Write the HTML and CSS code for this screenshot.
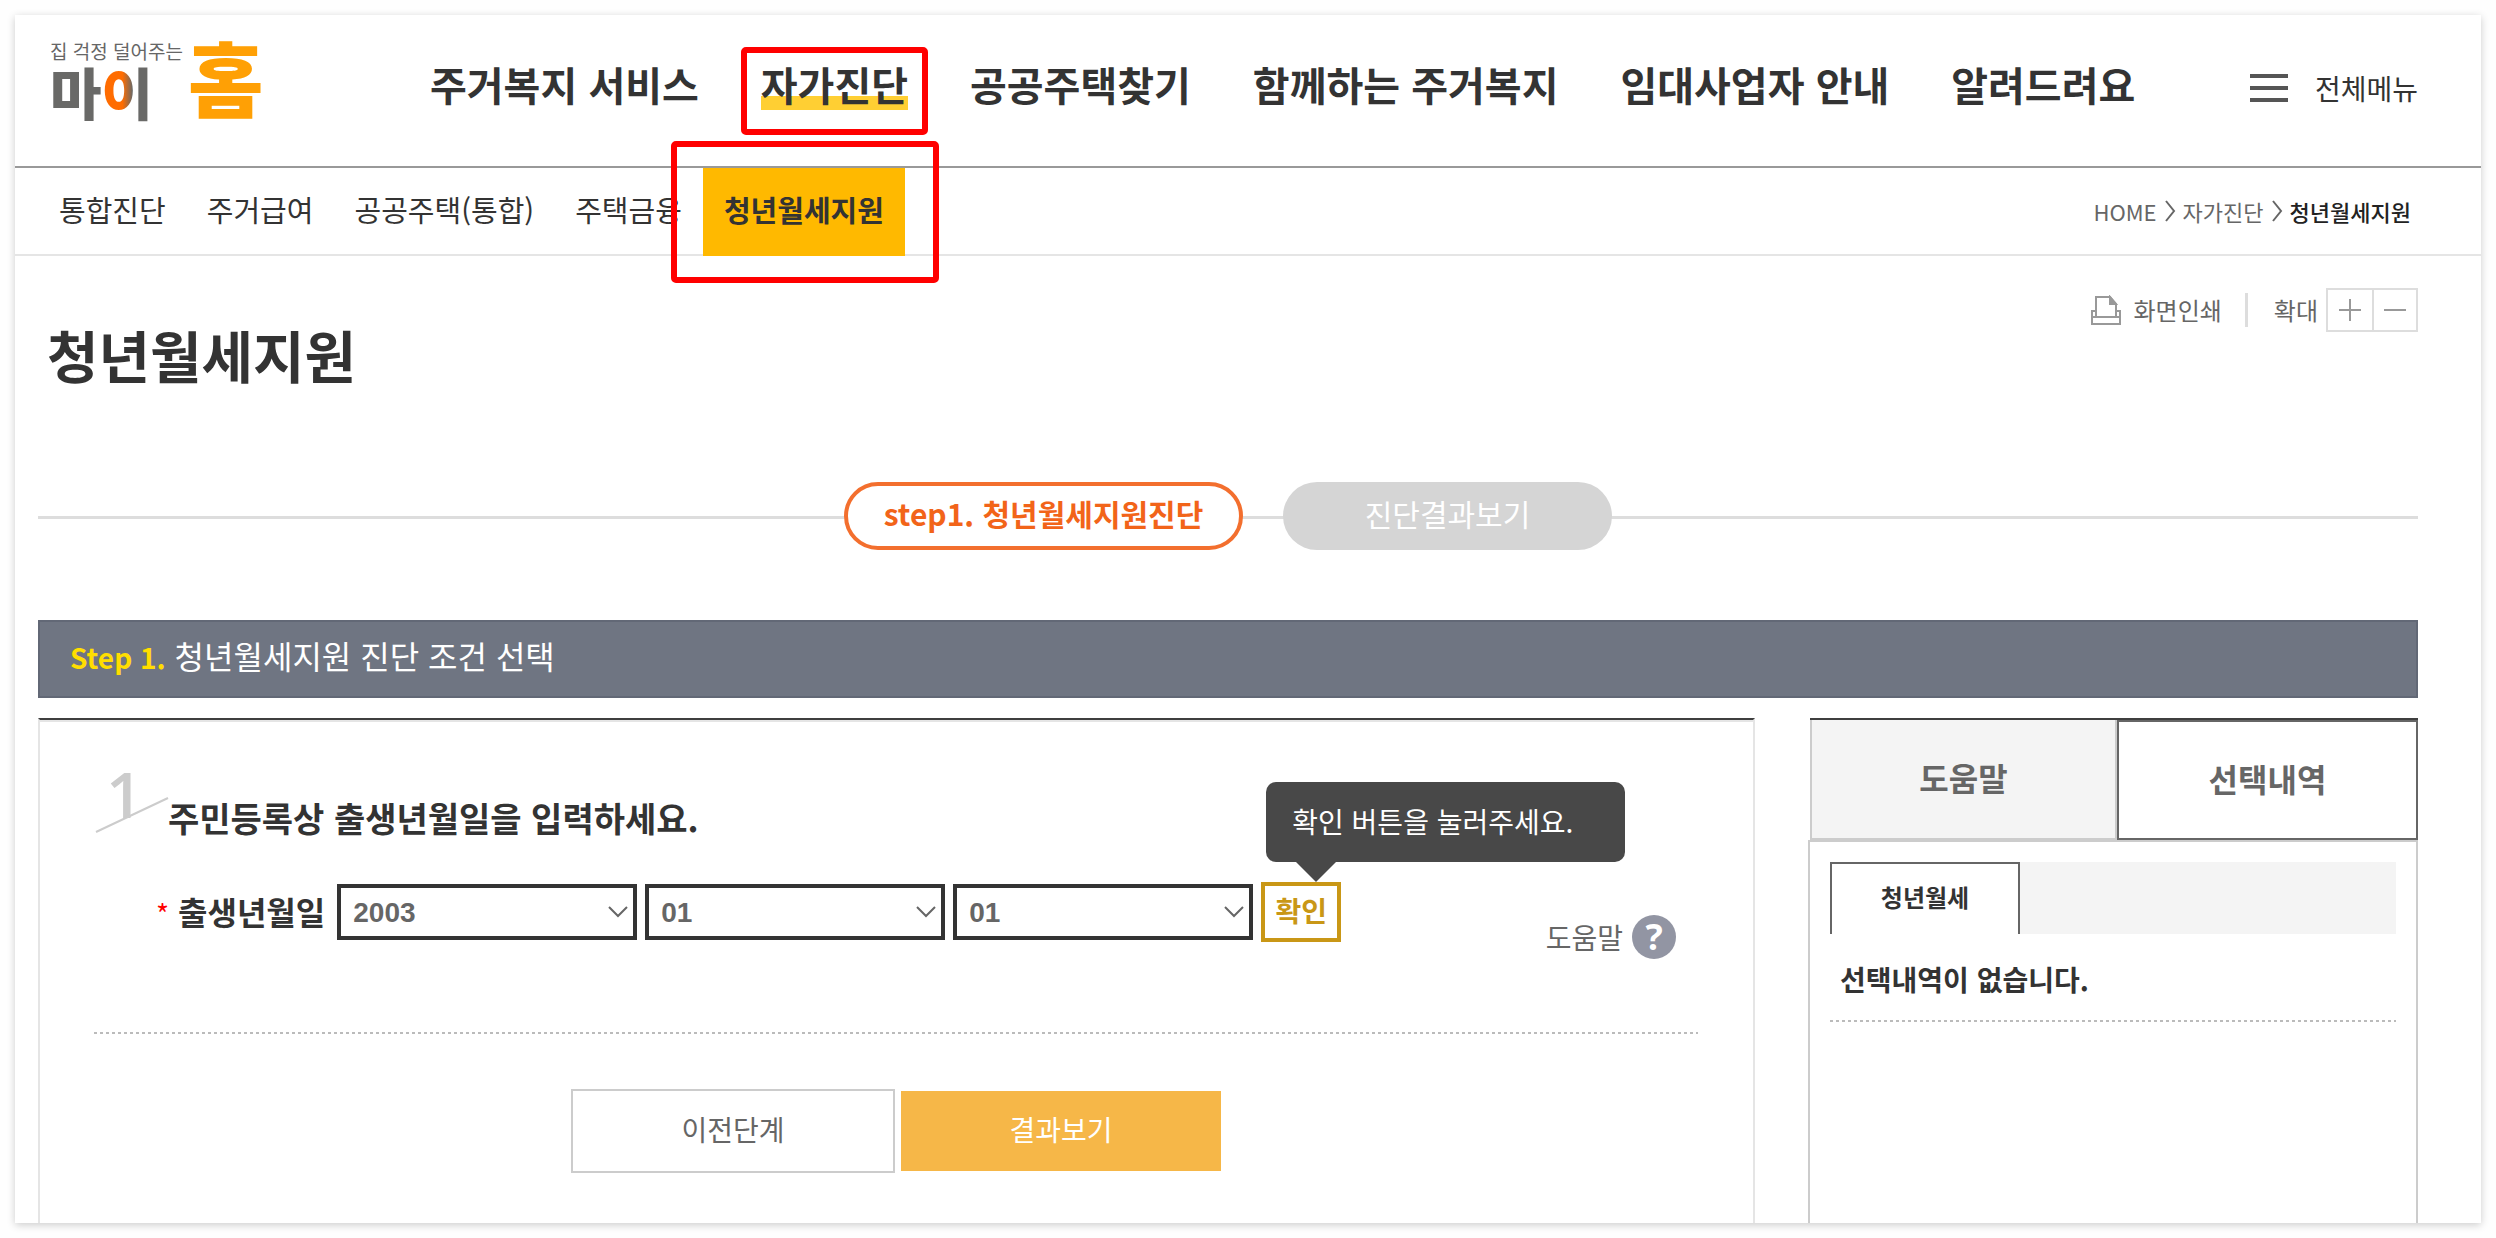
FILE: index.html
```html
<!DOCTYPE html>
<html lang="ko">
  <head>
    <meta charset="UTF-8" />
    <meta name="viewport" content="width=device-width, initial-scale=1.0" />
    <title>청년월세지원 | 마이홈</title>
    <link rel="stylesheet" href="styles.css">
  </head>
  <body>
    <div class="page">
      <header class="header">
        <a href="#" class="logo">
          <span class="logo-left">
            <span class="logo-tagline">집 걱정 덜어주는</span>
            <span class="logo-my">마<span class="logo-ring">이</span></span>
          </span>
          <span class="logo-home">홈</span>
        </a>
        <nav class="gnb">
          <a href="#">주거복지 서비스</a>
          <a href="#" class="active marked">자가진단</a>
          <a href="#">공공주택찾기</a>
          <a href="#">함께하는 주거복지</a>
          <a href="#">임대사업자 안내</a>
          <a href="#">알려드려요</a>
        </nav>
        <button type="button" class="all-menu">
          <svg width="38" height="28" viewBox="0 0 38 28">
            <path d="M0 2h38M0 14h38M0 26h38" stroke="#555" stroke-width="4" />
          </svg>
          전체메뉴
        </button>
      </header>

      <div class="sub-bar">
        <nav class="lnb">
          <a href="#">통합진단</a>
          <a href="#">주거급여</a>
          <a href="#">공공주택(통합)</a>
          <a href="#">주택금융</a>
          <a href="#" class="active marked">청년월세지원</a>
        </nav>
        <div class="breadcrumb">
          <a href="#">HOME</a>
          <svg width="12" height="22" viewBox="0 0 12 22"><path d="M2 1l8 10-8 10" /></svg>
          <a href="#">자가진단</a>
          <svg width="12" height="22" viewBox="0 0 12 22"><path d="M2 1l8 10-8 10" /></svg>
          <strong>청년월세지원</strong>
        </div>
      </div>

      <main class="content">
        <div class="title-row">
          <h1>청년월세지원</h1>
          <div class="tools">
            <button type="button" class="print">
              <svg width="30" height="30" viewBox="0 0 30 30" fill="none" stroke="#999" stroke-width="2">
                <path d="M5 22V2h14l6 7v13" />
                <path d="M19 2v7h6z" fill="#999" />
                <path d="M5 16H1v13h28V16h-4M1 22h28" />
              </svg>
              화면인쇄
            </button>
            <span class="divider"></span>
            <span class="zoom-label">확대</span>
            <div class="zoom-buttons">
              <button type="button" aria-label="확대">
                <svg width="24" height="24" viewBox="0 0 24 24"><path d="M1 12h22M12 1v22" /></svg>
              </button>
              <button type="button" aria-label="축소">
                <svg width="24" height="24" viewBox="0 0 24 24"><path d="M1 12h22" /></svg>
              </button>
            </div>
          </div>
        </div>

        <div class="steps">
          <span class="step on">step1. 청년월세지원진단</span>
          <span class="step">진단결과보기</span>
        </div>

        <h2 class="step-title"><strong>Step 1.</strong> 청년월세지원 진단 조건 선택</h2>

        <div class="columns">
          <form class="question-box">
            <div class="question">
              <svg class="slash" width="74" height="36" viewBox="0 0 74 36"><path d="M1 35L73 1" stroke="#ccc" stroke-width="2" /></svg>
              <span class="number">1</span>
              <h3>주민등록상 출생년월일을 입력하세요.</h3>
            </div>

            <div class="birth-row">
              <label for="year"><span class="required">*</span> 출생년월일</label>
              <span class="select">
                <select id="year" name="year"><option>2003</option></select>
                <svg width="20" height="12" viewBox="0 0 20 12"><path d="M1 1l9 9 9-9" /></svg>
              </span>
              <span class="select">
                <select name="month" aria-label="월"><option>01</option></select>
                <svg width="20" height="12" viewBox="0 0 20 12"><path d="M1 1l9 9 9-9" /></svg>
              </span>
              <span class="select">
                <select name="day" aria-label="일"><option>01</option></select>
                <svg width="20" height="12" viewBox="0 0 20 12"><path d="M1 1l9 9 9-9" /></svg>
              </span>
              <span class="confirm-wrap">
                <button type="button" class="confirm">확인</button>
                <span class="tooltip">확인 버튼을 눌러주세요.</span>
              </span>
              <a href="#" class="help">도움말 <span class="help-icon">?</span></a>
            </div>

            <div class="dots"></div>

            <div class="actions">
              <button type="button" class="prev">이전단계</button>
              <button type="submit" class="result">결과보기</button>
            </div>
          </form>

          <aside class="side">
            <div class="side-tabs">
              <button type="button">도움말</button>
              <button type="button" class="on">선택내역</button>
            </div>
            <div class="side-body">
              <div class="sub-tabs">
                <button type="button">청년월세</button>
              </div>
              <p class="empty">선택내역이 없습니다.</p>
              <div class="dots"></div>
            </div>
          </aside>
        </div>
      </main>
    </div>
  </body>
</html>
```
FILE: styles.css
```css
* {
  box-sizing: border-box;
}

body {
  margin: 0;
  padding: 15px;
  background-color: #fefefe;
  font-family: "Noto Sans CJK KR", "Noto Sans", sans-serif;
  font-size: 28px;
  line-height: 40px;
  color: #333;
}

a {
  color: inherit;
  text-decoration: none;
}

button {
  padding: 0 0 4px;
  border: none;
  background: none;
  font: inherit;
  color: inherit;
  cursor: pointer;
}

h1,
h2,
h3,
p {
  margin: 0;
}

.page {
  display: flex;
  flex-direction: column;
  min-height: calc(100vh - 30px);
  background-color: #fff;
  box-shadow: 0 2px 8px rgba(0, 0, 0, 0.2);
}

/* header */
.header {
  display: flex;
  align-items: center;
  height: 153px;
  padding: 0 63px 0 35px;
  border-bottom: 2px solid #999;
}

.logo {
  display: flex;
  align-items: center;
  width: 380px;
  margin-bottom: 24px;
  font-weight: bold;
}

.logo-left {
  display: flex;
  flex-direction: column;
  width: 138px;
}

.logo-tagline {
  font-size: 19px;
  line-height: 24px;
  color: #666;
  font-weight: normal;
  white-space: nowrap;
}

.logo-my {
  font-size: 56px;
  line-height: 56px;
  font-weight: 900;
  color: #696967;
}

.logo-ring {
  background: linear-gradient(90deg, #ff6c00 40%, #696967 60%);
  background-clip: text;
  -webkit-background-clip: text;
  color: transparent;
}

.logo-home {
  padding-bottom: 6px;
  font-size: 82px;
  line-height: 84px;
  font-weight: 900;
  color: #ffa005;
}

.gnb {
  display: flex;
  flex: 1;
  gap: 62px;
  margin-bottom: 14px;
  font-size: 40px;
  line-height: 56px;
  font-weight: bold;
  white-space: nowrap;
}

.gnb .active {
  background: linear-gradient(#ffcf33, #ffcf33) 0 40px / 100% 14px no-repeat;
}

/* red frames that point out the current menu */
.marked {
  position: relative;
}

.marked::after {
  content: "";
  position: absolute;
  z-index: 1;
  border: 6px solid #f00;
  border-radius: 5px;
}

.gnb .marked::after {
  inset: -9px -20px -23px;
}

.lnb .marked::after {
  inset: -27px -34px -27px -32px;
}

.all-menu {
  display: flex;
  align-items: center;
  gap: 27px;
  padding-bottom: 6px;
}

/* sub menu */
.sub-bar {
  display: flex;
  justify-content: space-between;
  height: 88px;
  padding: 0 70px 0 44px;
  border-bottom: 2px solid #e5e5e5;
}

.lnb {
  display: flex;
  gap: 41px;
  font-size: 29px;
  line-height: 82px;
}

.lnb .active {
  height: 88px;
  margin-left: -20px;
  padding: 0 21px;
  background-color: #ffb900;
  font-weight: bold;
}

.breadcrumb {
  display: flex;
  align-items: center;
  gap: 7px;
  font-size: 22px;
  color: #666;
}

.breadcrumb svg {
  fill: none;
  stroke: #666;
  stroke-width: 2;
}

.breadcrumb strong {
  font-weight: 500;
  color: #222;
}

/* content */
.content {
  display: flex;
  flex: 1;
  flex-direction: column;
  padding: 32px 63px 0 23px;
}

.title-row {
  display: flex;
  justify-content: space-between;
  align-items: flex-start;
}

.title-row h1 {
  padding: 26px 0 2px 9px;
  font-size: 56px;
  line-height: 80px;
}

.tools {
  display: flex;
  align-items: center;
  font-size: 24px;
  color: #666;
}

.print {
  display: flex;
  align-items: center;
  gap: 13px;
  padding: 0;
}

.divider {
  width: 3px;
  height: 34px;
  margin: 0 26px 0 23px;
  background-color: #ddd;
}

.zoom-buttons {
  display: flex;
  height: 44px;
  margin-left: 8px;
  border: 2px solid #ddd;
}

.zoom-buttons button {
  display: flex;
  align-items: center;
  justify-content: center;
  width: 44px;
  padding: 0;
}

.zoom-buttons button + button {
  border-left: 2px solid #ddd;
}

.zoom-buttons path {
  stroke: #999;
  stroke-width: 2;
}

.steps {
  display: flex;
  justify-content: center;
  gap: 40px;
  margin-top: 86px;
  background: linear-gradient(#ddd, #ddd) 0 34px / 100% 3px no-repeat;
}

.step {
  width: 329px;
  height: 68px;
  border-radius: 34px;
  background-color: #d5d5d5;
  color: #fff;
  font-size: 30px;
  line-height: 62px;
  text-align: center;
}

.step.on {
  width: 399px;
  border: 4px solid #f36f2e;
  background-color: #fff;
  color: #f26419;
  line-height: 54px;
  font-weight: bold;
}

.step-title {
  height: 78px;
  margin-top: 70px;
  padding-left: 30px;
  border: 2px solid #626876;
  background-color: #6f7582;
  color: #fff;
  font-size: 32px;
  line-height: 66px;
  font-weight: normal;
}

.step-title strong {
  color: #ffde00;
  font-size: 28px;
}

.columns {
  display: flex;
  flex: 1;
  gap: 53px;
  margin-top: 20px;
}

.question-box {
  flex: 1;
  padding: 50px 55px 48px 54px;
  border: 2px solid #e5e5e5;
  border-top-color: #3f3f3f;
  border-bottom: none;
  box-shadow: inset 0 2px #e5e5e5;
}

.question {
  position: relative;
  display: flex;
  height: 88px;
  padding-left: 12px;
}

.number {
  width: 62px;
  font: 600 64px/48px "Open Sans", sans-serif;
  color: #ccc;
}

.slash {
  position: absolute;
  left: 1px;
  top: 27px;
}

.question h3 {
  padding-top: 26px;
  font-size: 34px;
  line-height: 44px;
}

.birth-row {
  display: flex;
  align-items: center;
  gap: 8px;
  height: 174px;
  padding: 0 22px 66px 62px;
}

.birth-row label {
  margin-right: 4px;
  font-size: 32px;
  font-weight: bold;
}

.required {
  color: #f00;
  font-size: 28px;
  font-weight: normal;
}

.select {
  position: relative;
  display: flex;
}

.select select {
  appearance: none;
  width: 300px;
  height: 56px;
  padding: 0 12px;
  border: 4px solid #333;
  border-radius: 0;
  background-color: #fff;
  color: #666;
  font: bold 28px "Liberation Sans", Arial, sans-serif;
}

.select svg {
  position: absolute;
  right: 9px;
  top: 22px;
  fill: none;
  stroke: #666;
  stroke-width: 2;
  pointer-events: none;
}

.confirm-wrap {
  position: relative;
  display: flex;
}

.confirm {
  width: 80px;
  height: 60px;
  border: 4px solid #c99716;
  color: #c99716;
  font-weight: bold;
}

.tooltip {
  position: absolute;
  left: 5px;
  bottom: 80px;
  width: 359px;
  padding: 19px 26px 21px;
  border-radius: 10px;
  background-color: #484848;
  color: #fff;
  white-space: nowrap;
}

.tooltip::after {
  content: "";
  position: absolute;
  left: 30px;
  top: 100%;
  border: 20px solid transparent;
  border-top-color: #484848;
  border-bottom: none;
}

.help {
  display: flex;
  align-items: center;
  gap: 9px;
  margin: 50px 0 0 auto;
  color: #666;
}

.help-icon {
  width: 44px;
  height: 44px;
  border-radius: 50%;
  background-color: #9295a3;
  color: #fff;
  font: bold 36px/44px "Noto Sans", sans-serif;
  text-align: center;
}

.dots {
  height: 2px;
  background: repeating-linear-gradient(90deg, #bbb 0 3px, transparent 3px 6px);
}

.actions {
  display: flex;
  justify-content: center;
  align-items: center;
  gap: 6px;
  margin-top: 55px;
}

.prev {
  width: 324px;
  height: 84px;
  border: 2px solid #ccc;
  color: #666;
}

.result {
  width: 320px;
  height: 80px;
  background-color: #f6b748;
  color: #fff;
}

/* side panel */
.side {
  display: flex;
  flex-direction: column;
  width: 610px;
}

.side-tabs {
  display: flex;
  height: 122px;
  margin-left: 2px;
  border-top: 2px solid #3f3f3f;
  color: #666;
  font-size: 32px;
}

.side-tabs button {
  width: 307px;
  border: 2px solid #ccc;
  border-top: none;
  background-color: #f4f4f4;
  font-weight: bold;
}

.side-tabs .on {
  flex: 1;
  border: 2px solid #666;
  background-color: #fff;
}

.side-body {
  flex: 1;
  padding: 20px;
  border: 2px solid #ccc;
  border-bottom: none;
}

.sub-tabs {
  display: flex;
  height: 72px;
  background-color: #f4f4f4;
}

.sub-tabs button {
  width: 190px;
  border: 2px solid #666;
  border-bottom: none;
  background-color: #fff;
  font-size: 24px;
  font-weight: bold;
}

.empty {
  padding: 25px 10px 21px;
  font-weight: bold;
}
```
